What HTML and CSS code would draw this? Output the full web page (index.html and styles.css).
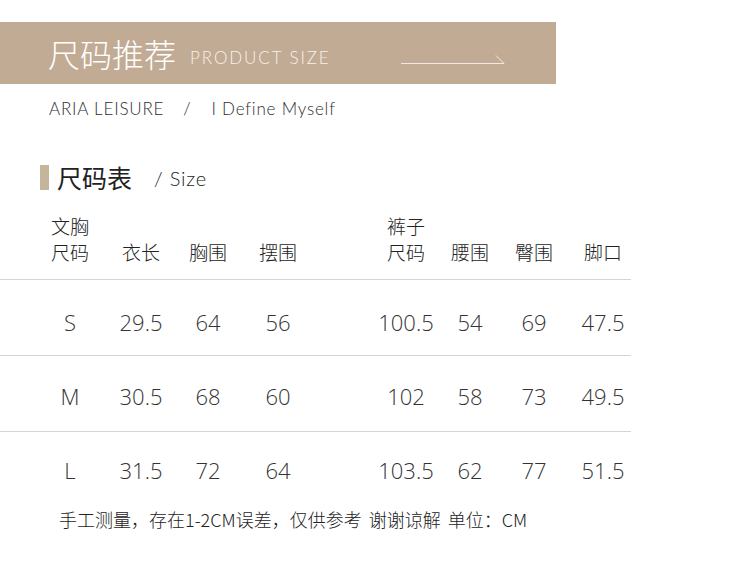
FILE: index.html
```html
<!DOCTYPE html>
<html lang="zh-CN">
<head>
<meta charset="utf-8">
<title>尺码推荐</title>
<link rel="stylesheet" href="styles.css">
</head>
<body>
<header class="banner">
  <h1 class="banner-title">尺码推荐</h1>
  <span class="banner-sub">PRODUCT SIZE</span>
  <svg class="banner-arrow" width="104" height="22" viewBox="0 0 104 22" aria-hidden="true">
    <path d="M0 21.5H103L95 13.5" fill="none" stroke="#f1e9e0" stroke-width="1"/>
  </svg>
</header>

<p class="brand"><span>ARIA LEISURE</span><span class="brand-sep">/</span><span>I Define Myself</span></p>

<div class="section-title">
  <span class="section-bar"></span>
  <h2 class="section-name">尺码表</h2>
  <span class="section-en">/ Size</span>
</div>

<div class="size-table">
  <div class="row row-head">
    <div class="cell">文胸<br>尺码</div>
    <div class="cell">衣长</div>
    <div class="cell">胸围</div>
    <div class="cell">摆围</div>
    <div class="cell spacer"></div>
    <div class="cell">裤子<br>尺码</div>
    <div class="cell">腰围</div>
    <div class="cell">臀围</div>
    <div class="cell">脚口</div>
  </div>
  <div class="row row-data row-s">
    <div class="cell">S</div>
    <div class="cell">29.5</div>
    <div class="cell">64</div>
    <div class="cell">56</div>
    <div class="cell spacer"></div>
    <div class="cell">100.5</div>
    <div class="cell">54</div>
    <div class="cell">69</div>
    <div class="cell">47.5</div>
  </div>
  <div class="row row-data row-m">
    <div class="cell">M</div>
    <div class="cell">30.5</div>
    <div class="cell">68</div>
    <div class="cell">60</div>
    <div class="cell spacer"></div>
    <div class="cell">102</div>
    <div class="cell">58</div>
    <div class="cell">73</div>
    <div class="cell">49.5</div>
  </div>
  <div class="row row-data row-last">
    <div class="cell">L</div>
    <div class="cell">31.5</div>
    <div class="cell">72</div>
    <div class="cell">64</div>
    <div class="cell spacer"></div>
    <div class="cell">103.5</div>
    <div class="cell">62</div>
    <div class="cell">77</div>
    <div class="cell">51.5</div>
  </div>
</div>

<p class="note">手工测量，存在1-2CM误差，仅供参考<span class="note-gap">谢谢谅解</span><span class="note-gap">单位：CM</span></p>
</body>
</html>
```

FILE: styles.css
```css
html, body {
  margin: 0;
  padding: 0;
  background: #ffffff;
}

body {
  width: 752px;
  font-family: "Lato", "Noto Sans CJK SC", sans-serif;
  color: #333333;
}

.banner {
  margin-top: 22px;
  width: 556px;
  height: 62px;
  background: #c2ab94;
  display: flex;
  align-items: center;
  padding-left: 48px;
  box-sizing: border-box;
}

.banner-title {
  margin: 0;
  font-family: "Noto Sans CJK SC", sans-serif;
  font-weight: 300;
  font-size: 32px;
  line-height: 36px;
  color: #ffffff;
  letter-spacing: 0;
}

.banner-sub {
  margin-left: 14px;
  margin-top: 9px;
  font-family: "Lato", sans-serif;
  font-weight: 300;
  font-size: 17px;
  line-height: 20px;
  letter-spacing: 1.9px;
  color: #f6f1eb;
}

.banner-arrow {
  margin-left: auto;
  margin-right: 51px;
  display: block;
}

.brand {
  margin: 15px 0 0 49px;
  font-family: "Lato", sans-serif;
  font-weight: 300;
  font-size: 17px;
  line-height: 20px;
  color: #2e2e2e;
  letter-spacing: 0.8px;
  display: flex;
}

.brand-sep {
  margin: 0 20px 0 19px;
}

.section-title {
  margin: 46px 0 0 40px;
  height: 25px;
  display: flex;
  align-items: center;
}

.section-bar {
  width: 9px;
  height: 25px;
  background: #c5b59b;
}

.section-name {
  margin: 0 0 0 8px;
  font-family: "Noto Sans CJK SC", sans-serif;
  font-weight: 400;
  font-size: 25px;
  line-height: 25px;
  color: #222222;
}

.section-en {
  margin-left: 22px;
  margin-top: 2px;
  font-family: "Lato", sans-serif;
  font-weight: 300;
  font-size: 20px;
  line-height: 25px;
  letter-spacing: 0.8px;
  color: #222222;
}

.size-table {
  margin-top: 23px;
}

.row {
  width: 631px;
  box-sizing: border-box;
  padding-left: 36px;
  display: grid;
  grid-template-columns: 68px 74px 60px 80px 47px 82px 46px 82px 56px;
  border-bottom: 1px solid #d4d4d4;
}

.row-last {
  border-bottom: none;
}

.cell {
  text-align: center;
}

.row-head {
  padding-bottom: 14px;
  align-items: end;
}

.row-head .cell {
  font-family: "Noto Sans CJK SC", sans-serif;
  font-weight: 300;
  font-size: 19px;
  line-height: 26px;
  color: #222222;
}

.row-data {
  height: 76px;
  padding-top: 4px;
  align-items: center;
}

.row-s {
  padding-top: 8px;
}

.row-last {
  height: 75px;
  padding-top: 0;
}

.row-data .cell {
  font-family: "Open Sans", sans-serif;
  font-weight: 300;
  font-size: 22px;
  line-height: 30px;
  color: #333333;
}

.note {
  margin: 0 0 0 59px;
  font-family: "Noto Sans CJK SC", sans-serif;
  font-weight: 300;
  font-size: 18px;
  line-height: 24px;
  color: #222222;
}

.note-gap {
  margin-left: 7px;
}
```
